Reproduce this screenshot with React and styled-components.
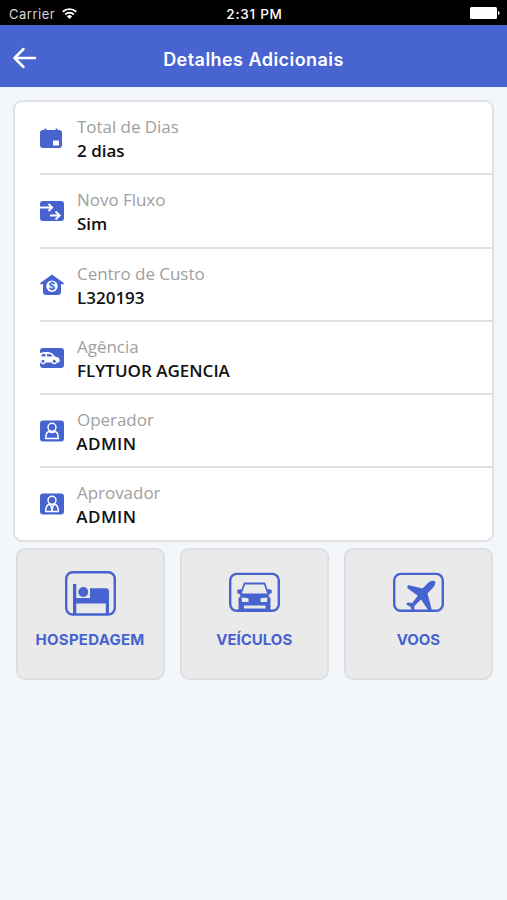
import React from 'react'
import styled, { createGlobalStyle } from 'styled-components'

const blue = '#4663d0'

const GlobalStyle = createGlobalStyle`
  * {
    box-sizing: border-box;
  }
  body {
    margin: 0;
    background: #f3f7fb;
    font-family: "Open Sans", "Noto Sans", sans-serif;
  }
  svg {
    display: block;
    flex: none;
  }
`

const Screen = styled.div`
  min-height: 900px;
  background: #f3f7fb;
`

const StatusBar = styled.div`
  height: 25px;
  padding: 2px 7px 0 9px;
  display: grid;
  grid-template-columns: 1fr auto 1fr;
  align-items: center;
  background: #000;
  color: #fff;
  font-family: Inter, "Liberation Sans", sans-serif;
  font-size: 13px;
`

const Carrier = styled.div`
  display: flex;
  align-items: center;
  gap: 7px;
  color: #d6d6d6;
  letter-spacing: 0.5px;
`

const Clock = styled.div`
  font-weight: 500;
  font-size: 13.5px;
  letter-spacing: 0.75px;
`

const Battery = styled.div`
  display: flex;
  justify-content: flex-end;
  padding-bottom: 2px;
`

const Header = styled.header`
  height: 62px;
  padding: 0 12px;
  display: grid;
  grid-template-columns: 26px 1fr 26px;
  align-items: center;
  background: #4864d1;
  color: #fff;
`

const BackButton = styled.button`
  border: none;
  padding: 3px 0 0;
  background: none;
  cursor: pointer;
`

const Title = styled.h1`
  margin: 6px 0 0;
  text-align: center;
  white-space: nowrap;
  font-family: Inter, sans-serif;
  font-size: 18px;
  font-weight: 600;
  letter-spacing: 0.45px;
`

const Card = styled.section`
  height: 442px;
  margin: 13px 13px 0;
  padding-left: 25px;
  border: 2px solid #dfe1e3;
  border-radius: 9px;
  background: #fff;
  display: grid;
  grid-template-rows: repeat(5, 73.3px) 1fr;
`

const Row = styled.div`
  display: flex;
  padding-top: 12px;
  border-bottom: 2px solid #dedfe1;
  &:last-child {
    border-bottom: none;
  }
`

const RowIcon = styled.div`
  width: 37px;
  padding-top: 13px;
`

const Label = styled.div`
  height: 24px;
  line-height: 25px;
  font-size: 17px;
  color: #a0a0a0;
  letter-spacing: -0.04px;
`

const Value = styled.div`
  height: 25px;
  line-height: 25px;
  font-size: 17px;
  font-weight: 600;
  color: #111;
  margin-left: ${p => p.$shift || 0}px;
  letter-spacing: ${p => p.$spacing || 0}px;
`

const Tiles = styled.div`
  display: grid;
  grid-template-columns: repeat(3, 1fr);
  gap: 15px;
  padding: 6px 14px 0 15.5px;
`

const Tile = styled.button`
  height: 132px;
  padding: 21px 0 0;
  display: flex;
  flex-direction: column;
  align-items: center;
  border: 2px solid #dddfe0;
  border-radius: 9px;
  background: #eaeaea;
  cursor: pointer;
`

const TileLabel = styled.span`
  margin-top: 14px;
  line-height: 20px;
  color: ${blue};
  font-family: Inter, sans-serif;
  font-size: 15px;
  font-weight: 700;
  letter-spacing: ${p => p.$spacing || 0}px;
`

const WifiIcon = () => (
  <svg width="15" height="12" viewBox="0 0 15 12" fill="none" stroke="#fff" strokeWidth="1.9">
    <path d="M0.8 3.800a9.6 9.6 0 0 1 13.4 0M3.2 6.500a6.2 6.2 0 0 1 8.6 0" />
    <path d="M7.5 11L4.9 8.400a3.7 3.7 0 0 1 5.2 0z" fill="#fff" stroke="none" />
  </svg>
)

const BatteryIcon = () => (
  <svg width="30" height="12" viewBox="0 0 30 12" fill="#fff">
    <rect width="27" height="12" rx="1.5" />
    <path d="M28 4c2.1.5 2.1 3.500 0 4z" />
  </svg>
)

const ArrowIcon = () => (
  <svg width="26" height="22" viewBox="0 0 26 22" fill="none" stroke="#fff" strokeWidth="2.5" strokeLinecap="round" strokeLinejoin="round">
    <path d="M23 11H2.500M11.500 2L2.500 11l9 9" />
  </svg>
)

const SmallIcon = ({ children }) => (
  <svg width="24" height="22" viewBox="0 0 24 22" fill={blue}>{children}</svg>
)

const CalendarIcon = () => (
  <SmallIcon>
    <rect y="3" width="22" height="18" rx="3" />
    <path d="M5.500 2.500v4M16.500 2.500v4" stroke={blue} strokeWidth="2.200" strokeLinecap="round" />
    <rect x="13" y="13.500" width="6" height="5" rx="0.6" fill="#fff" />
  </SmallIcon>
)

const FlowIcon = () => (
  <SmallIcon>
    <rect y="1" width="24" height="20" rx="3" />
    <path d="M0 7.500h11.500M8.500 4l3.700 3.500L8.500 11M10 15.500h9.500M15.500 11.500l4.300 4-4.300 4" fill="none" stroke="#fff" strokeWidth="1.8" />
  </SmallIcon>
)

const HouseIcon = () => (
  <SmallIcon>
    <path d="M12 .5L24 9.300l-1 1.200-2-.6V18a3 3 0 0 1-3 3H6a3 3 0 0 1-3-3V9.900l-2 .6L0 9.300z" />
    <circle cx="12" cy="12.300" r="5.700" fill="#fff" />
    <text x="12" y="16.100" textAnchor="middle" fontFamily="Inter, sans-serif" fontSize="10.500" fontWeight="700">$</text>
  </SmallIcon>
)

const AgencyIcon = () => (
  <SmallIcon>
    <rect y="1" width="24" height="20" rx="3" />
    <path d="M0 6C4 4.600 9 4.600 12 6.300l3 3.100 3.800 1.300 1 2.800-.8 1.900H0z" fill="#fff" />
    <path d="M1 9.200L2.500 7h3v2.500zM7 7l3.500.3 2.300 2.200H7z" />
    <g stroke="#fff" strokeWidth="1.300">
      <circle cx="3" cy="14.300" r="2.200" />
      <circle cx="14.300" cy="14.300" r="2.200" />
    </g>
  </SmallIcon>
)

const PersonIcon = ({ tie }) => (
  <SmallIcon>
    <rect y="0.500" width="24" height="21" rx="3" />
    <g fill="none" stroke="#fff" strokeWidth="1.500" strokeLinejoin="round">
      <circle cx="12" cy="7.300" r="4" />
      <path d="M9.200 11.300C6.400 12.200 5.700 14.500 5.700 18.500h12.600c0-4-.7-6.300-3.500-7.200" />
      {!tie && <path d="M9 11.500c2 1.200 4 1.200 6 0" />}
      {tie && <path d="M9.200 11.300L12 14l2.800-2.700M12 14v4" />}
      {tie && <path d="M12 13l1.200 1.500-1.200 3.500-1.200-3.500z" fill="#fff" strokeWidth="0.600" />}
    </g>
  </SmallIcon>
)

const TileIcon = ({ tall, children }) => (
  <svg width="51" height="45" viewBox="0 0 51 45" fill={blue}>
    <rect x="1.200" y={tall ? 1.200 : 2.900} width="48.600" height={tall ? 42.300 : 36.900} rx="6.500" fill="none" stroke={blue} strokeWidth="2.400" />
    {children}
  </svg>
)

const BedIcon = () => (
  <TileIcon tall>
    <path d="M8 13h3.300v14h13.700v-9.700h16a3 3 0 0 1 3 3V43h-3.200V32.500h-29.500v10.500H8z" />
    <circle cx="18.300" cy="21" r="4.900" />
  </TileIcon>
)

const CarIcon = () => (
  <TileIcon>
    <path d="M15.500 12.500h20l4 11h-28z" fill="none" stroke={blue} strokeWidth="1.800" strokeLinejoin="round" />
    <path d="M8.300 19l3.300-1 1.500 3.500-3 1.500-1.800-1zM42.700 19l-3.300-1-1.500 3.500 3 1.500 1.800-1z" />
    <path d="M12.500 23.500h26l3 4V40h-32V27.500z" />
    <path d="M12.500 26.500l7 .8v3.700h-6.500zM38.500 26.500l-7 .8v3.700H38zM15 34.500h21.500v3H15z" fill="#eaeaea" />
  </TileIcon>
)

const PlaneIcon = () => (
  <TileIcon>
    <path d="M35.500 11.500c2.500-2 5.300-2.200 6.300-1.200 1.100 1.100.7 3.700-1.500 5.900l-5.800 6.200 4.500 17h-3.500L28 28.500l-6.600 6.500v4.400h-2.400l-1.600-3.700-4.300-2.300 1.500-1.900 4.700.4 5.500-7.200-9.900-7.200c-1.400-1.300-.3-3.300 1.300-3.200l13.300 3.200z" />
  </TileIcon>
)

const details = [
  { label: 'Total de Dias', value: '2 dias', icon: <CalendarIcon /> },
  { label: 'Novo Fluxo', value: 'Sim', icon: <FlowIcon /> },
  { label: 'Centro de Custo', value: 'L320193', icon: <HouseIcon /> },
  { label: 'Agência', value: 'FLYTUOR AGENCIA', icon: <AgencyIcon /> },
  { label: 'Operador', value: 'ADMIN', icon: <PersonIcon />, shift: -0.8, spacing: 0.5 },
  { label: 'Aprovador', value: 'ADMIN', icon: <PersonIcon tie />, shift: -0.8, spacing: 0.5 },
]

const tiles = [
  { label: 'HOSPEDAGEM', icon: <BedIcon />, spacing: 0.25 },
  { label: 'VEÍCULOS', icon: <CarIcon /> },
  { label: 'VOOS', icon: <PlaneIcon /> },
]

const App = () => {
  return (
    <Screen>
      <GlobalStyle />
      <StatusBar>
        <Carrier>Carrier <WifiIcon /></Carrier>
        <Clock>2:31 PM</Clock>
        <Battery><BatteryIcon /></Battery>
      </StatusBar>
      <Header>
        <BackButton aria-label="Voltar"><ArrowIcon /></BackButton>
        <Title>Detalhes Adicionais</Title>
      </Header>
      <Card>
        {details.map(item => (
          <Row key={item.label}>
            <RowIcon>{item.icon}</RowIcon>
            <div>
              <Label>{item.label}</Label>
              <Value $shift={item.shift} $spacing={item.spacing}>{item.value}</Value>
            </div>
          </Row>
        ))}
      </Card>
      <Tiles>
        {tiles.map(tile => (
          <Tile key={tile.label}>
            {tile.icon}
            <TileLabel $spacing={tile.spacing}>{tile.label}</TileLabel>
          </Tile>
        ))}
      </Tiles>
    </Screen>
  )
}

export default App
